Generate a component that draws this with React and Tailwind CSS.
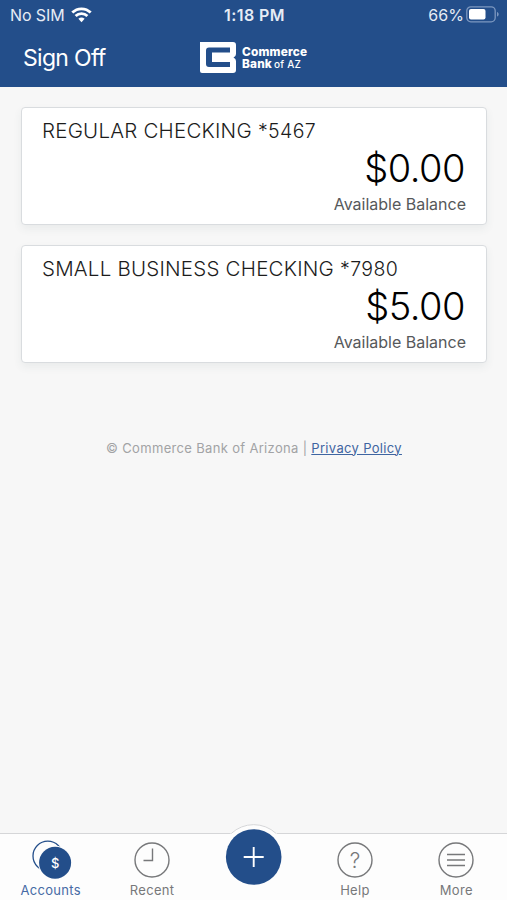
const accounts = [
  { name: 'REGULAR CHECKING', number: '*5467', balance: '$0.00' },
  { name: 'SMALL BUSINESS CHECKING', number: '*7980', balance: '$5.00' },
];

function WifiIcon() {
  return (
    <svg width="21" height="16" viewBox="0 0 21 16" fill="none" stroke="#fff" strokeWidth="2.8">
      <path d="M1.3 5.6a13 13 0 0 1 18.4 0" />
      <path d="M4.6 9a8.4 8.4 0 0 1 11.8 0" />
      <path d="M7.4 11.8a4.6 4.6 0 0 1 6.2 0L10.5 15.3z" fill="#fff" stroke="none" />
    </svg>
  );
}

function BatteryIcon() {
  return (
    <svg width="33" height="17" viewBox="0 0 33 17">
      <rect x="0.8" y="0.8" width="28.4" height="15" rx="4" fill="none" stroke="#7d98c0" strokeWidth="1.3" />
      <rect x="3" y="3" width="16.5" height="10.6" rx="2" fill="#fff" />
      <path d="M31 6v4.6c1-.4 1.7-1.2 1.7-2.3S32 6.4 31 6z" fill="#7d98c0" />
    </svg>
  );
}

function LogoMark() {
  return (
    <svg width="36" height="31" viewBox="0 0 36 31">
      <path d="M0 0H33Q36 0 36 3V12Q36 14.5 33.5 15.5Q36 16.5 36 19V28Q36 31 33 31H2Q0 31 0 29Z" fill="#fff" />
      <path d="M30 5.5H9Q6 5.5 6 8.5V22Q6 25 9 25H30V20H12V10.5H30Z" fill="#234e8a" />
    </svg>
  );
}

function AccountsIcon() {
  return (
    <svg width="43" height="40" viewBox="0 0 43 40">
      <circle cx="18.8" cy="16" r="14.8" fill="none" stroke="#234e8a" strokeWidth="1.3" />
      <circle cx="26.1" cy="22.8" r="17" fill="#fdfdfd" />
      <circle cx="26.1" cy="22.8" r="16" fill="#234e8a" />
      <text x="26.1" y="27.5" textAnchor="middle" fontSize="13" fill="#fff" className="font-['Inter',sans-serif] font-medium">$</text>
    </svg>
  );
}

function Ring({ children }) {
  return (
    <svg width="36" height="36" viewBox="0 0 36 36" fill="none" stroke="#77787a" strokeWidth="1.4">
      <circle cx="18" cy="18" r="17" />
      {children}
    </svg>
  );
}

function Tab({ label, active, children }) {
  return (
    <button className="flex flex-1 flex-col items-center">
      <span className={`flex h-[47px] items-end justify-center ${active ? 'pb-px' : 'pb-[3px]'}`}>{children}</span>
      <span className={`text-[13px] leading-[18px] tracking-[0.3px] ${active ? 'text-[#466ba5]' : 'text-[#77787a]'}`}>
        {label}
      </span>
    </button>
  );
}

export default function App() {
  return (
    <div className="flex h-[900px] w-[507px] flex-col overflow-hidden bg-[#f7f7f7] font-['Inter',sans-serif]">
      <header className="h-[87px] bg-[#234e8a] text-white">
        {/* Status bar */}
        <div className="grid h-[29px] grid-cols-3 items-center pr-2 pl-2.5 text-[16px] text-[#e6ecf5]">
          <div className="flex items-center gap-1.5">
            <span className="tracking-[-0.1px]">No SIM</span>
            <WifiIcon />
          </div>
          <span className="text-center font-semibold tracking-[0.4px]">1:18 PM</span>
          <div className="flex items-center justify-end gap-0.5">
            <span className="tracking-[0.1px]">66%</span>
            <BatteryIcon />
          </div>
        </div>

        {/* Nav bar */}
        <div className="grid h-[57px] grid-cols-[200px_1fr] items-center">
          <button className="pt-0.5 pl-[23px] text-left text-[23px] tracking-[-0.7px]">Sign Off</button>
          <div className="flex items-center gap-1.5">
            <LogoMark />
            <p className="pt-px text-[11.8px] leading-[12px] font-extrabold tracking-[0.2px]">
              Commerce
              <br />
              Bank<span className="ml-[2px] text-[10px] font-medium">of AZ</span>
            </p>
          </div>
        </div>
      </header>

      <main className="flex-1 pt-5 pr-5 pl-[21px]">
        <div className="flex flex-col gap-[19.5px]">
          {accounts.map((a) => (
            <section
              key={a.number}
              className="h-[118px] rounded-[4px] border border-[#d9dcdf] bg-white px-5 pt-[9px] shadow-[0_4px_8px_rgba(60,80,90,0.07)]"
            >
              <h2 className="text-[20.5px] leading-7 font-[350] tracking-[0.22px] text-[#1c1c1c]">
                {a.name} <span className="text-[19.5px] tracking-[0.4px]">{a.number}</span>
              </h2>
              <p className="pr-px text-right text-[38px] leading-[47px] font-[350] tracking-[-0.5px] text-black">{a.balance}</p>
              <p className="text-right text-[16px] leading-6 text-[#56585a]">Available Balance</p>
            </section>
          ))}
        </div>
        <p className="mt-[75px] text-center text-[13px] leading-5 tracking-[0.33px] text-[#a2a3a5]">
          © Commerce Bank of Arizona | <a className="text-[#3f65a1] underline">Privacy Policy</a>
        </p>
      </main>

      {/* Tab bar */}
      <nav className="relative flex h-[67px] border-t border-[#d5d6d8] bg-[#fdfdfd]">
        <Tab label="Accounts" active>
          <AccountsIcon />
        </Tab>
        <Tab label="Recent">
          <Ring>
            <path d="M18.5 6.5V18.5H9.5" />
          </Ring>
        </Tab>
        <div className="flex-1">
          <svg className="absolute -top-[12px] left-[219px]" width="70" height="72" viewBox="0 0 70 72">
            <circle cx="34.7" cy="35" r="33" fill="#fdfdfd" />
            <path d="M12.2 11.5A33 33 0 0 1 57.2 11.5" fill="none" stroke="#d5d6d8" />
            <circle cx="34.7" cy="35" r="27.8" fill="#234e8a" />
            <path d="M34.7 25V45M24.7 35H44.7" stroke="#fff" strokeWidth="1.9" />
          </svg>
        </div>
        <Tab label="Help">
          <Ring>
            <text x="18" y="25.5" textAnchor="middle" fontSize="21" fill="#77787a" stroke="none" className="font-['Inter',sans-serif] font-light">?</text>
          </Ring>
        </Tab>
        <Tab label="More">
          <Ring>
            <path d="M9 12.5H27M9 18H27M9 23.5H27" />
          </Ring>
        </Tab>
      </nav>
    </div>
  );
}
